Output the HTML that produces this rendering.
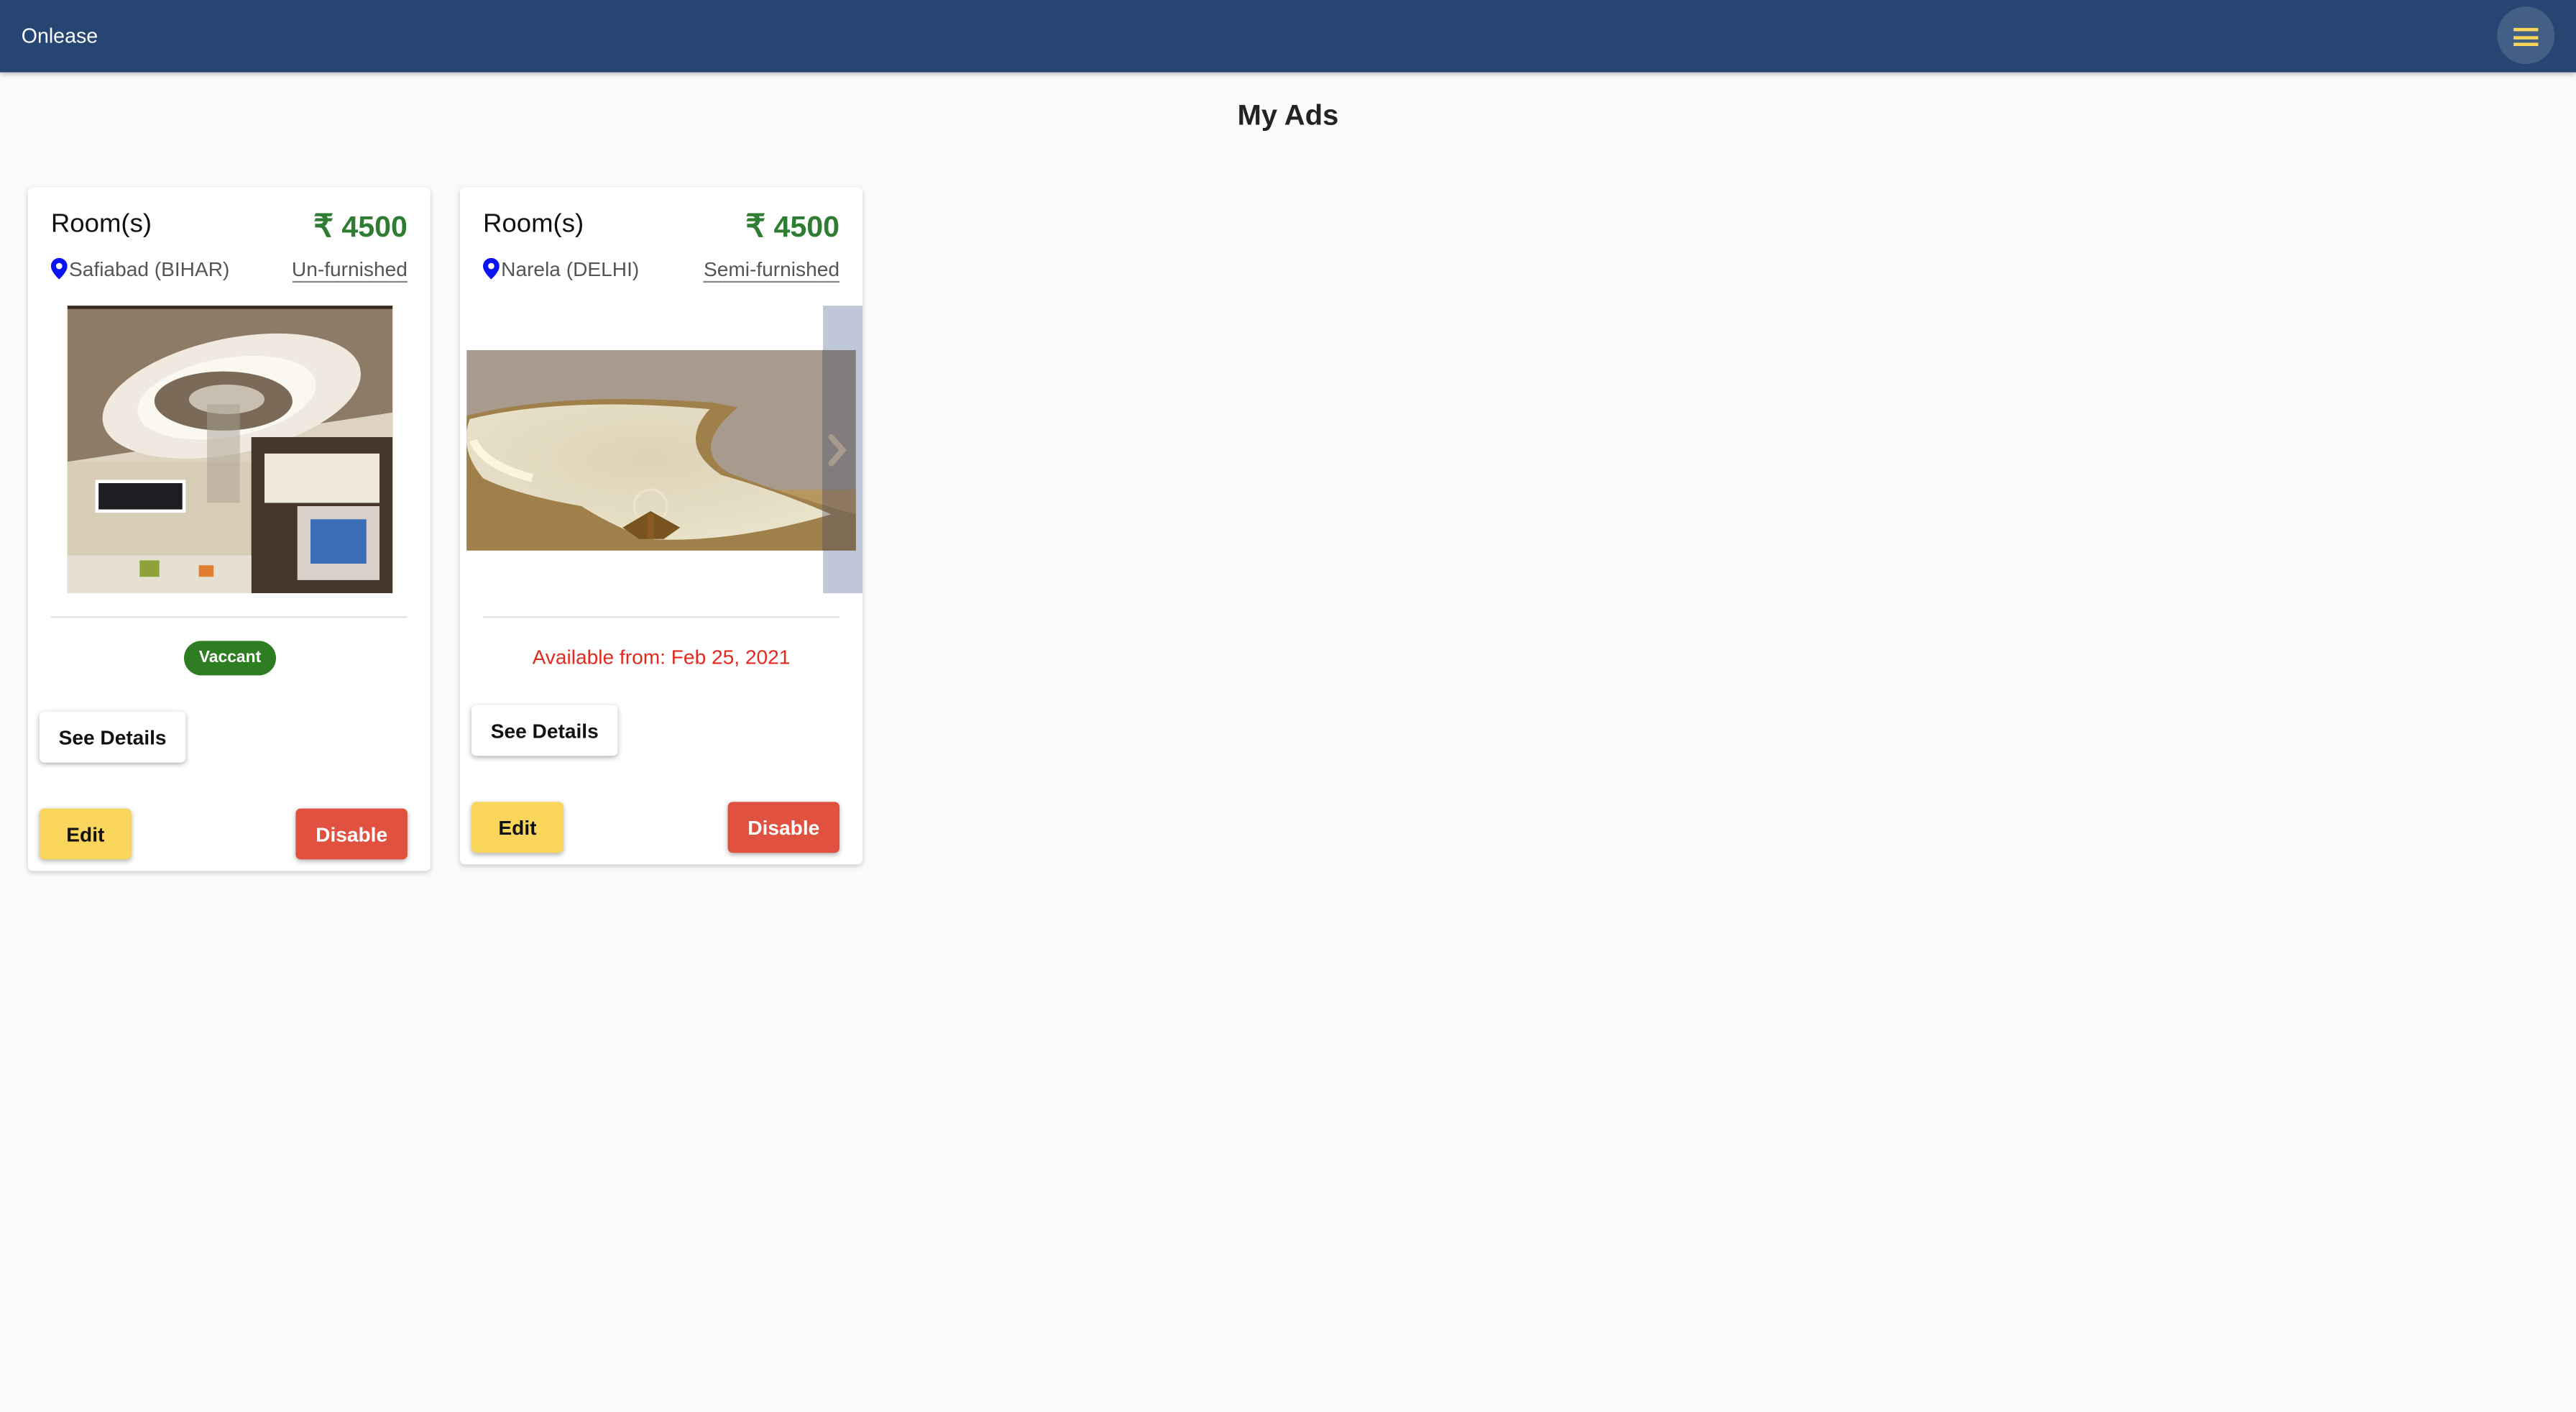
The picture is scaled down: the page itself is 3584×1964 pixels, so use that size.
<!DOCTYPE html>
<html><head><meta charset="utf-8">
<style>
html,body{margin:0;padding:0;}
body{width:3584px;height:1964px;overflow:hidden;background:#fafafa;font-family:"Liberation Sans",Arial,sans-serif;}
#w{position:absolute;left:0;top:0;width:1568px;height:859.3px;transform:scale(2.285714);transform-origin:0 0;}
.hdr{position:absolute;left:0;top:0;width:1568px;height:43.75px;background:#264573;box-shadow:0 1px 3px rgba(0,0,0,.25);}
.logo{position:absolute;left:13px;top:15px;color:#fff;font-size:12.5px;}
.menu{position:absolute;left:1520px;top:4.4px;width:35px;height:35px;border-radius:50%;background:rgba(255,255,255,.14);}
.menu i{position:absolute;left:9.6px;width:15.8px;height:1.75px;background:#f9d55b;}
h1{position:absolute;left:0;width:1568px;top:60px;margin:0;text-align:center;font-size:17.5px;font-weight:bold;color:#222;}
.card{position:absolute;top:114px;width:245px;background:#fff;border-radius:3px;box-shadow:0 1px 3px rgba(0,0,0,.18);}
.t{position:absolute;left:14px;font-size:16px;color:#111;}
.price{position:absolute;right:14px;top:127px;font-size:18px;font-weight:bold;color:#2e7d32;}
.loc{position:absolute;left:14px;top:157px;font-size:12.3px;color:#555;}
.loc svg{vertical-align:-2px;margin-right:1px}
.furn{position:absolute;right:14px;top:157px;font-size:12.3px;color:#555;border-bottom:1.5px solid #888;padding-bottom:0px;}
.hr{position:absolute;left:14px;right:14px;height:1px;background:#e3e3e3;}
.btn{position:absolute;height:31px;border-radius:3px;font-size:12.3px;font-weight:bold;line-height:32px;text-align:center;box-shadow:0 1px 3px rgba(0,0,0,.3);}
.sd{background:#fff;color:#111;width:89px;left:7px;}
.ed{background:#f9d55b;color:#111;width:56px;left:7px;}
.ds{background:#e05140;color:#fff;width:68px;right:14px;}
</style></head><body>
<div id="w">
<div class="hdr"><div class="logo">Onlease</div>
<div class="menu"><i style="top:13.1px"></i><i style="top:17.5px"></i><i style="top:21.9px"></i></div></div>
<h1>My Ads</h1>

<!-- card 1 -->
<div class="card" style="left:17px;height:416px;"></div>
<div style="position:absolute;left:17px;top:0;width:245px;height:540px;">
 <div class="t" style="top:128px">Room(s)</div>
 <div class="price"><span style="font-size:19px">₹</span> 4500</div>
 <div class="loc"><svg width="10" height="13" viewBox="0 0 10 13"><path d="M5 0C2.2 0 0 2.2 0 5c0 3.5 5 8 5 8s5-4.5 5-8C10 2.2 7.8 0 5 0zm0 6.8A1.9 1.9 0 1 1 5 3a1.9 1.9 0 0 1 0 3.8z" fill="#0a14f0"/></svg>Safiabad (BIHAR)</div>
 <div class="furn">Un-furnished</div>
 <svg style="position:absolute;left:24px;top:186px" width="198" height="175" viewBox="0 0 198 175">
  <rect width="198" height="175" fill="#8d7b66"/>
  <rect y="0" width="198" height="2" fill="#3a2a20"/>
  <path d="M0 95 L198 65 L198 175 L0 175Z" fill="#ddd3c0"/>
  <rect x="0" y="95" width="115" height="80" fill="#d8cdb6"/>
  <ellipse cx="100" cy="55" rx="80" ry="35" fill="#efe9df" transform="rotate(-12 100 55)"/>
  <ellipse cx="97" cy="56" rx="55" ry="24" fill="#fbf8f2" transform="rotate(-10 97 56)"/>
  <ellipse cx="95" cy="58" rx="42" ry="18" fill="#7b6a58"/>
  <ellipse cx="97" cy="57" rx="23" ry="9" fill="#c8bfb1"/>
  <rect x="85" y="60" width="20" height="60" fill="#a8a090" opacity=".5"/>
  <rect x="112" y="80" width="86" height="95" fill="#45362c"/>
  <rect x="120" y="90" width="70" height="30" fill="#efe8dc"/>
  <rect x="140" y="122" width="50" height="45" fill="#d8d2c8"/>
  <rect x="148" y="130" width="34" height="27" fill="#3a6fb8"/>
  <rect x="17" y="106" width="55" height="20" fill="#fff"/>
  <rect x="19" y="108" width="51" height="16" fill="#201d22"/>
  <rect x="0" y="152" width="112" height="23" fill="#e6e0d2"/>
  <rect x="44" y="155" width="12" height="10" fill="#8ea23a"/>
  <rect x="80" y="158" width="9" height="7" fill="#e07d30"/>
 </svg>
 <div class="hr" style="top:375px"></div>
 <div style="position:absolute;left:95px;top:390px;width:56px;height:21px;border-radius:11px;background:#2e7d22;color:#fff;font-size:10px;font-weight:bold;line-height:21px;text-align:center;">Vaccant</div>
 <div class="btn sd" style="top:433px">See Details</div>
 <div class="btn ed" style="top:492px">Edit</div>
 <div class="btn ds" style="top:492px">Disable</div>
</div>

<!-- card 2 -->
<div class="card" style="left:280px;height:412px;"></div>
<div style="position:absolute;left:280px;top:0;width:245px;height:540px;">
 <div class="t" style="top:128px">Room(s)</div>
 <div class="price"><span style="font-size:19px">₹</span> 4500</div>
 <div class="loc"><svg width="10" height="13" viewBox="0 0 10 13"><path d="M5 0C2.2 0 0 2.2 0 5c0 3.5 5 8 5 8s5-4.5 5-8C10 2.2 7.8 0 5 0zm0 6.8A1.9 1.9 0 1 1 5 3a1.9 1.9 0 0 1 0 3.8z" fill="#0a14f0"/></svg>Narela (DELHI)</div>
 <div class="furn">Semi-furnished</div>
 <div style="position:absolute;left:220.5px;top:186px;width:24.5px;height:175px;background:#bec8d8;"></div>
 <svg style="position:absolute;left:4px;top:212.5px" width="237" height="122.5" viewBox="0 0 237 122.5">
  <defs><radialGradient id="g" cx="50%" cy="40%" r="60%"><stop offset="0" stop-color="#ddd2b8"/><stop offset="1" stop-color="#e8e2c8"/></radialGradient></defs>
  <rect width="237" height="122.5" fill="#a89a8c"/>
  <rect y="85" width="237" height="38" fill="#b89660"/>
  <path d="M0 40 Q60 25 150 32 L165 35 Q135 60 160 75 Q200 90 237 100 L237 122 L0 122Z" fill="#a0804a"/>
  <path d="M2 42 Q60 28 148 36 Q128 58 155 76 Q190 86 222 100 Q160 118 110 115 Q85 105 70 95 Q30 88 10 78 Q-5 60 2 42Z" fill="url(#g)"/>
  <path d="M4 55 Q10 70 40 78" stroke="#fffbe6" stroke-width="5" fill="none" opacity=".8"/>
  <circle cx="112" cy="95" r="10" fill="none" stroke="#eee3cc" stroke-width="1.5"/>
  <path d="M95 108 L112 98 L130 108 L120 115 L105 115Z" fill="#7a5420"/>
  <rect x="110" y="100" width="4" height="15" fill="#8a5a20"/>
  <rect x="216.5" y="0" width="20.5" height="122.5" fill="rgba(60,70,100,.35)"/>
  <path d="M222 53 L229 61 L222 69" stroke="#a89a8c" stroke-width="3.5" fill="none" stroke-linecap="round"/>
 </svg>
 <div class="hr" style="top:375px"></div>
 <div style="position:absolute;left:0;width:245px;top:393px;text-align:center;font-size:12.3px;color:#e42a1e;">Available from: Feb 25, 2021</div>
 <div class="btn sd" style="top:429px">See Details</div>
 <div class="btn ed" style="top:488px">Edit</div>
 <div class="btn ds" style="top:488px">Disable</div>
</div>
</div>
</body></html>
